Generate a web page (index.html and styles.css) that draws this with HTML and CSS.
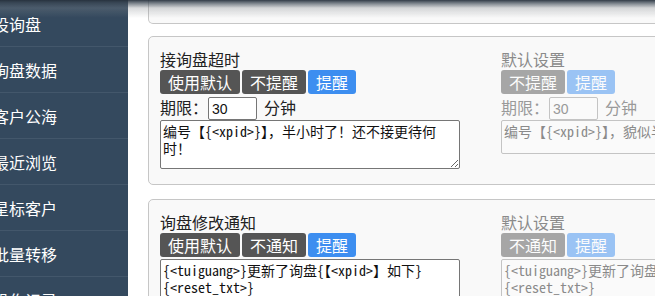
FILE: index.html
```html
<!DOCTYPE html>
<html lang="zh-CN">
<head>
<meta charset="utf-8">
<title>询盘设置</title>
<link rel="stylesheet" href="styles.css">
</head>
<body>
<div class="layout">
  <nav class="sidebar">
    <div class="nav-item"><span>设询盘</span></div>
    <div class="nav-item"><span>询盘数据</span></div>
    <div class="nav-item"><span>客户公海</span></div>
    <div class="nav-item"><span>最近浏览</span></div>
    <div class="nav-item"><span>星标客户</span></div>
    <div class="nav-item"><span>批量转移</span></div>
    <div class="nav-item"><span>操作记录</span></div>
  </nav>
  <main class="main">
    <div class="panel prev"></div>
    <section class="panel">
      <div class="col">
        <div class="title">接询盘超时</div>
        <div class="btns">
          <span class="btn dark">使用默认</span><span class="btn dark">不提醒</span><span class="btn blue">提醒</span>
        </div>
        <div class="limit">期限：<input class="num" type="text" value="30"><span class="unit">分钟</span></div>
        <textarea class="msg">编号【{&lt;xpid&gt;}】，半小时了！还不接更待何时！</textarea>
      </div>
      <div class="col def">
        <div class="title">默认设置</div>
        <div class="btns">
          <span class="btn dark">不提醒</span><span class="btn blue">提醒</span>
        </div>
        <div class="limit">期限：<input class="num" type="text" value="30" disabled><span class="unit">分钟</span></div>
        <textarea class="msg short" disabled>编号【{&lt;xpid&gt;}】，貌似半小时了，还没接呢</textarea>
      </div>
    </section>
    <section class="panel">
      <div class="col">
        <div class="title">询盘修改通知</div>
        <div class="btns">
          <span class="btn dark">使用默认</span><span class="btn dark">不通知</span><span class="btn blue">提醒</span>
        </div>
        <textarea class="msg gap">{&lt;tuiguang&gt;}更新了询盘{【&lt;xpid&gt;】如下}
{&lt;reset_txt&gt;}</textarea>
      </div>
      <div class="col def">
        <div class="title">默认设置</div>
        <div class="btns">
          <span class="btn dark">不通知</span><span class="btn blue">提醒</span>
        </div>
        <textarea class="msg gap" disabled>{&lt;tuiguang&gt;}更新了询盘{【&lt;xpid&gt;】如下}
{&lt;reset_txt&gt;}</textarea>
      </div>
    </section>
  </main>
</div>
<div class="topshade"></div>
</body>
</html>
```
FILE: styles.css
```css
html, body {
  margin: 0;
  padding: 0;
  width: 655px;
  height: 296px;
  overflow: hidden;
  background: #fff;
  font-family: "Noto Sans CJK SC", "Liberation Sans", sans-serif;
  color: #222;
}

.layout {
  display: flex;
  height: 296px;
}

.sidebar {
  width: 128px;
  flex: 0 0 128px;
  background: #34495e;
  padding-top: 1px;
  overflow: hidden;
}

.nav-item {
  height: 45px;
  border-bottom: 1px solid #43576b;
  display: flex;
  align-items: center;
  color: #fff;
  font-size: 16px;
  white-space: nowrap;
}

.nav-item span {
  margin-left: -7px;
  line-height: 20px;
}

.main {
  flex: 1;
  padding-left: 20px;
  overflow: hidden;
}

.panel {
  width: 720px;
  box-sizing: border-box;
  background: #f9f9f9;
  border: 1px solid #c6c6c6;
  border-radius: 5px;
  padding: 11px 11px 15px;
  margin-bottom: 14px;
  display: grid;
  grid-template-columns: 341px 1fr;
}

.panel.prev {
  height: 24px;
  border-top: none;
  border-radius: 0 0 5px 5px;
  padding: 0;
  margin-bottom: 12px;
  display: block;
}

.title {
  font-size: 16px;
  line-height: 22px;
  height: 22px;
  color: #222;
}

.btns {
  display: flex;
  gap: 2px;
  height: 24px;
}

.btn {
  display: block;
  height: 24px;
  line-height: 24px;
  padding: 0 8px;
  font-size: 16px;
  color: #fff;
  border-radius: 3px;
  white-space: nowrap;
}

.btn.dark { background: #555; }
.btn.blue { background: #3d8ef0; }

.limit {
  display: flex;
  align-items: center;
  height: 26px;
  font-size: 16px;
  line-height: 20px;
  white-space: nowrap;
}

.num {
  align-self: flex-end;
  box-sizing: border-box;
  width: 49px;
  height: 23px;
  margin: 0;
  padding: 1px 3px;
  border: 1px solid #767676;
  border-radius: 2px;
  background: #fff;
  font-family: "Liberation Sans", sans-serif;
  font-size: 14px;
  color: #111;
}

.unit {
  margin-left: 7px;
}

.msg {
  display: block;
  box-sizing: border-box;
  width: 300px;
  height: 49px;
  margin: 0;
  padding: 2px;
  border: 1px solid #767676;
  border-radius: 2px;
  background: #fff;
  font-family: "Noto Sans Mono CJK SC", "Noto Sans CJK SC", monospace;
  font-size: 14px;
  line-height: 17px;
  color: #111;
  resize: both;
}

.msg.gap { margin-top: 2px; height: 60px; }
.msg.short { height: 34px; }

.def .title { color: #8a8a8a; }
.def .btn { opacity: 0.5; }
.def .limit { color: #9a9a9a; }
.def .num {
  border-color: #c4c4c4;
  color: #999;
  background: #fafafa;
}
.def .msg {
  border-color: #c4c4c4;
  color: #8a8a8a;
  background: #fafafa;
  resize: none;
}

.topshade {
  position: fixed;
  top: 0;
  left: 0;
  right: 0;
  height: 18px;
  pointer-events: none;
  background: linear-gradient(to bottom,
    rgba(40, 50, 62, 0.95) 0,
    rgba(60, 72, 84, 0.7) 3px,
    rgba(130, 135, 140, 0.3) 8px,
    rgba(255, 255, 255, 0) 18px);
}
```
